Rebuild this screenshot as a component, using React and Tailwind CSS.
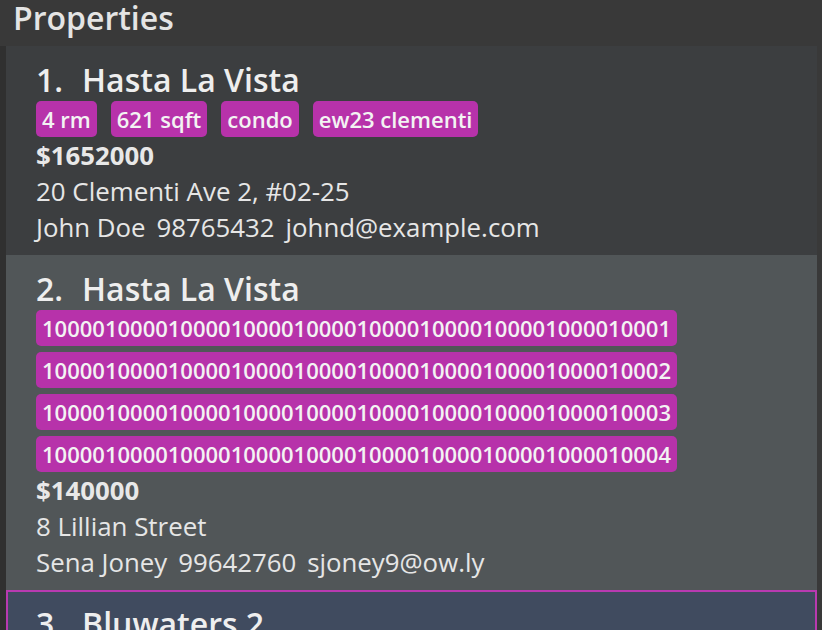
import React from "react";

const font = { fontFamily: '"Open Sans", "Noto Sans", sans-serif' };

function Tag({ children }) {
  return (
    <span className="inline-block h-[36px] leading-[36px] px-[6px] rounded-[5px] bg-[#b732aa] text-[#f3f3f3] text-[22px] font-semibold whitespace-nowrap">
      {children}
    </span>
  );
}

function Card({ index, name, tags, price, address, owner, phone, email, bg, selected }) {
  return (
    <div
      className={
        "pr-[20px] pb-[10px] " +
        bg +
        (selected ? " border-2 border-[#b83ab0] pt-[11px] pl-[28px]" : " pt-[13px] pl-[30px]")
      }
    >
      <div className="flex gap-[19px] text-[32px] leading-[42px] font-semibold text-[#eeeeee]">
        <span>{index}.</span>
        <span>{name}</span>
      </div>
      {tags && (
        <div className="flex flex-wrap gap-x-[14px] gap-y-[6px]">
          {tags.map((t) => (
            <Tag key={t}>{t}</Tag>
          ))}
        </div>
      )}
      {price && (
        <div className="text-[25.8px] leading-[36px] font-bold text-[#e8e8e8]">{price}</div>
      )}
      {address && (
        <div className="text-[25.9px] leading-[36px] text-[#e6e6e6]">{address}</div>
      )}
      {owner && (
        <div className="flex gap-[11px] text-[25.8px] leading-[36px] text-[#e6e6e6]">
          <span>{owner}</span>
          <span>{phone}</span>
          <span>{email}</span>
        </div>
      )}
    </div>
  );
}

export default function App() {
  return (
    <div style={font} className="w-[822px] h-[630px] overflow-hidden bg-[#393939] flex flex-col">
      <div className="h-[46px] shrink-0 px-[13px] pt-[1px] text-[32px] leading-[34px] font-semibold text-[#e4e4e4]">
        Properties
      </div>
      <div className="flex-1 flex min-h-0">
        <div className="w-[6px] shrink-0 bg-[#303030]" />
        <div className="flex-1 flex flex-col overflow-hidden">
          <Card
            index={1}
            name="Hasta La Vista"
            tags={["4 rm", "621 sqft", "condo", "ew23 clementi"]}
            price="$1652000"
            address="20 Clementi Ave 2, #02-25"
            owner="John Doe"
            phone="98765432"
            email="johnd@example.com"
            bg="bg-[#3c3e40]"
          />
          <Card
            index={2}
            name="Hasta La Vista"
            tags={[
              "10000100001000010000100001000010000100001000010001",
              "10000100001000010000100001000010000100001000010002",
              "10000100001000010000100001000010000100001000010003",
              "10000100001000010000100001000010000100001000010004",
            ]}
            price="$140000"
            address="8 Lillian Street"
            owner="Sena Joney"
            phone="99642760"
            email="sjoney9@ow.ly"
            bg="bg-[#515658]"
          />
          <Card
            index={3}
            name="Bluwaters 2"
            tags={["3 rm", "900 sqft", "condo"]}
            price="$1200000"
            address="Bukit Timah Road"
            owner="Jane Tan"
            phone="91234567"
            email="jane@example.com"
            bg="bg-[#404b5f]"
            selected
          />
        </div>
        <div className="w-[5px] shrink-0 bg-[#393939]" />
      </div>
    </div>
  );
}
